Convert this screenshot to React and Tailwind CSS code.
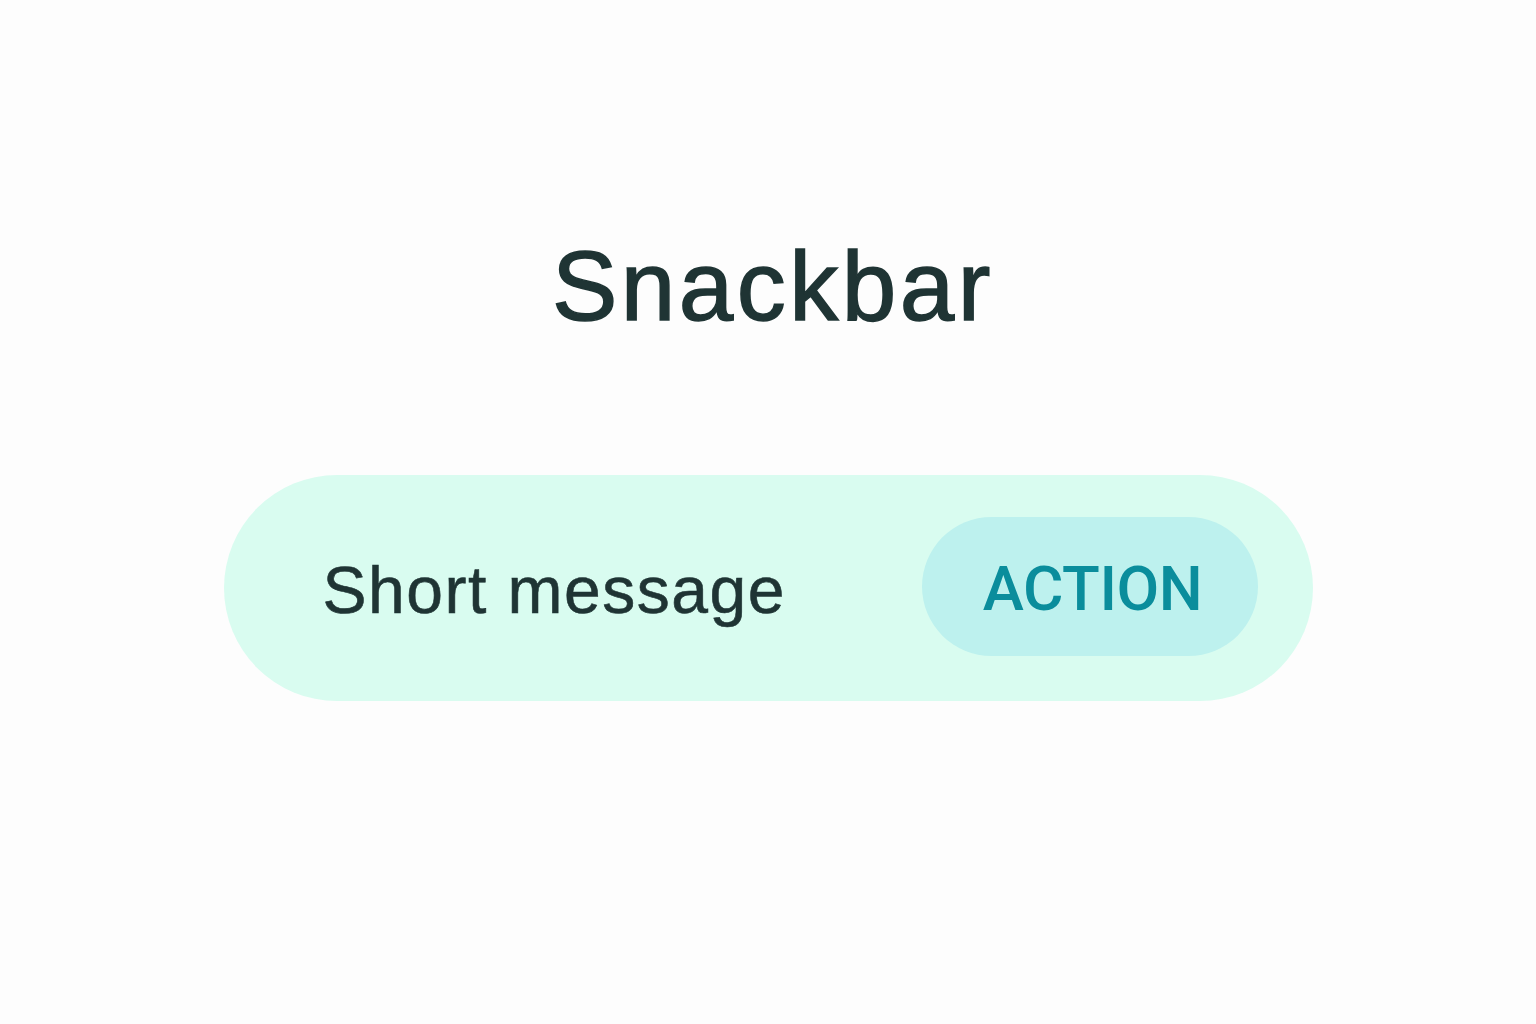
export default function App() {
  return (
    <div className="flex min-h-screen flex-col items-center bg-[#fdfdfd] pt-[237px] font-['Liberation_Sans',Arial,sans-serif]">
      <h1 className="ml-[10px] text-[98px] leading-none tracking-[3.5px] text-[#1f3434] [-webkit-text-stroke:1.5px_#1f3434]">
        Snackbar
      </h1>

      <div className="mt-[140px] flex h-[226px] w-[1089px] items-center justify-between rounded-full bg-[#d9fcf0] pl-[99px] pr-[55px]">
        <p className="mt-1 text-[66px] leading-none tracking-[1.5px] text-[#1f3434] [-webkit-text-stroke:0.6px_#1f3434]">
          Short message
        </p>

        <button className="mb-[3px] flex h-[139px] w-[336px] items-center justify-center rounded-full bg-[#bdf1ee] pl-[6px] pt-1 font-['Roboto',sans-serif] text-[62px] font-medium leading-none tracking-[-0.5px] text-[#0a8d9c]">
          ACTION
        </button>
      </div>
    </div>
  );
}
